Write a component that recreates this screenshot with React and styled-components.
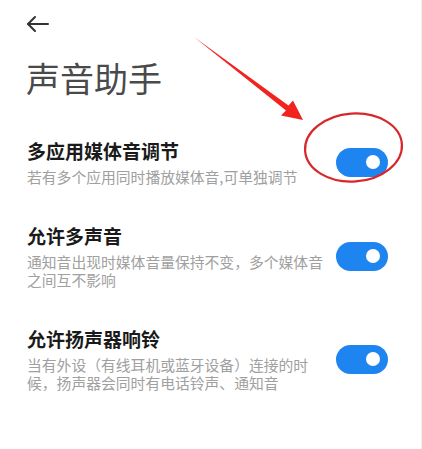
import React from "react";
import styled, { createGlobalStyle } from "styled-components";

const GlobalStyle = createGlobalStyle`
  html, body {
    margin: 0;
    padding: 0;
    background: #ffffff;
  }
  body {
    font-family: "Noto Sans CJK SC", "Noto Sans", sans-serif;
  }
`;

const Page = styled.div`
  position: relative;
  width: 422px;
  height: 449px;
  overflow: hidden;
  background: #ffffff;
  box-sizing: border-box;
  border-right: 1px solid #f0f0f0;
`;

const Header = styled.div`
  height: 48px;
  display: flex;
  align-items: center;
  padding-left: 26px;
`;

const BackButton = styled.button`
  border: 0;
  background: none;
  padding: 0;
  width: 24px;
  height: 24px;
  display: flex;
  align-items: center;
  justify-content: center;
  color: #333333;
`;

const Title = styled.h1`
  margin: 8px 0 0;
  padding-left: 26px;
  font-size: 34px;
  line-height: 44px;
  font-weight: 400;
  color: #4a4a4a;
`;

const List = styled.div`
  margin-top: 20px;
  display: flex;
  flex-direction: column;
`;

const Row = styled.div`
  display: flex;
  align-items: center;
  justify-content: space-between;
  padding: 18px 33px 19px 27px;
`;

const TextCol = styled.div`
  display: flex;
  flex-direction: column;
  gap: 4px;
  max-width: 300px;
`;

const RowTitle = styled.div`
  font-size: 19px;
  line-height: 26px;
  font-weight: 700;
  color: #1a1a1a;
`;

const RowDesc = styled.div`
  font-size: 14.8px;
  line-height: 18px;
  color: #a0a0a0;
`;

const Switch = styled.div`
  flex: none;
  width: 52px;
  height: 29px;
  border-radius: 15px;
  background: ${({ $on }) => ($on ? "#1d84f0" : "#d8d8d8")};
  display: flex;
  align-items: center;
  justify-content: ${({ $on }) => ($on ? "flex-end" : "flex-start")};
  padding: 0 8px;
  box-sizing: border-box;
`;

const Knob = styled.div`
  width: 14px;
  height: 14px;
  border-radius: 50%;
  background: #ffffff;
`;

const Annotation = styled.svg`
  position: absolute;
  left: 0;
  top: 0;
  pointer-events: none;
`;

const items = [
  { title: "多应用媒体音调节", desc: "若有多个应用同时播放媒体音,可单独调节" },
  { title: "允许多声音", desc: "通知音出现时媒体音量保持不变，多个媒体音之间互不影响" },
  { title: "允许扬声器响铃", desc: "当有外设（有线耳机或蓝牙设备）连接的时候，扬声器会同时有电话铃声、通知音" },
];

const App = () => {
  return (
    <Page>
      <GlobalStyle />
      <Header>
        <BackButton aria-label="back">
          <svg width="24" height="24" viewBox="0 0 24 24" fill="none" stroke="currentColor" strokeWidth="2" strokeLinecap="round" strokeLinejoin="round">
            <path d="M22 12H2" />
            <path d="M9 5l-7 7 7 7" />
          </svg>
        </BackButton>
      </Header>
      <Title>声音助手</Title>
      <List>
        {items.map((item, index) => (
          <Row key={index}>
            <TextCol>
              <RowTitle>{item.title}</RowTitle>
              <RowDesc>{item.desc}</RowDesc>
            </TextCol>
            <Switch $on>
              <Knob />
            </Switch>
          </Row>
        ))}
      </List>
      <Annotation width="422" height="449" viewBox="0 0 422 449">
        <polygon points="194,37 288.5,105.5 293,100.5 303,120 281,115.5 286,110.5" fill="#f2231f" />
        <ellipse cx="353.5" cy="147.5" rx="48.5" ry="34" fill="none" stroke="#d8262b" strokeWidth="2.2" transform="rotate(-4 353.5 147.5)" />
      </Annotation>
    </Page>
  );
};

export default App;
